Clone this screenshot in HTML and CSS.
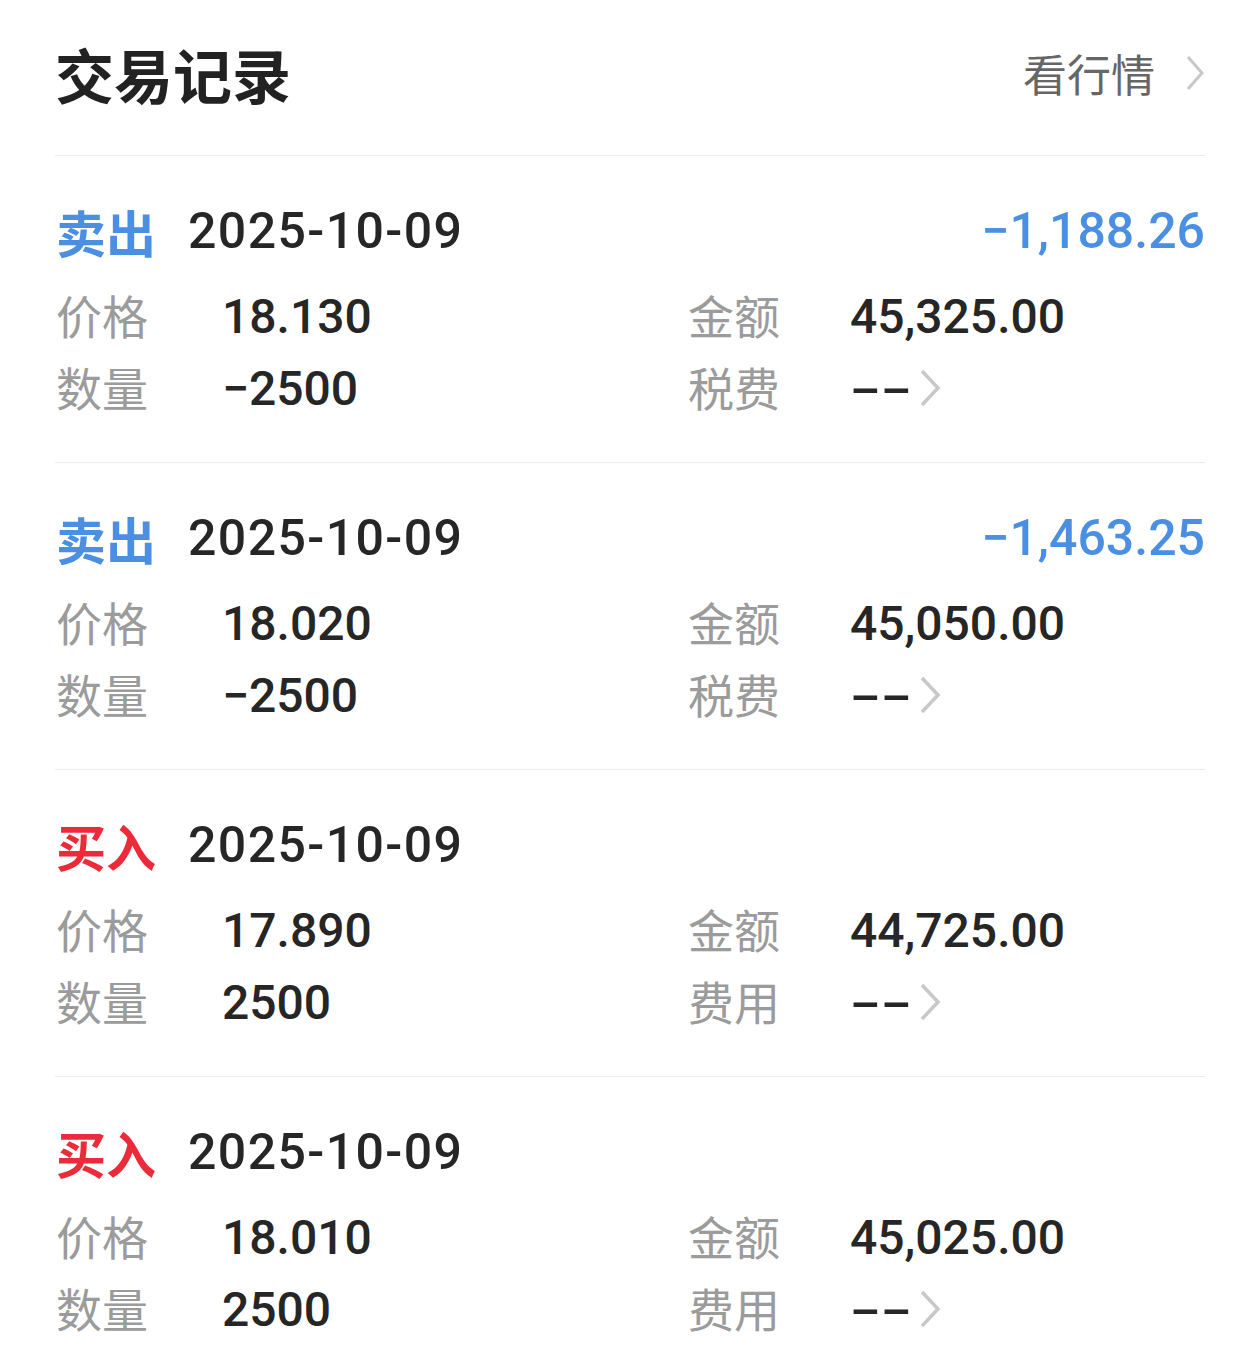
FILE: index.html
```html
<!DOCTYPE html>
<html lang="zh-CN">
<head>
    <meta charset="UTF-8">
    <meta name="viewport" content="width=device-width, initial-scale=1.0">
    <title>交易记录</title>
    <link rel="stylesheet" href="styles.css">
</head>
<body>
    <div class="page">
        <div class="page-header">
            <h1>交易记录</h1>
            <a class="more" href="#">看行情
                <svg class="chevron big" viewBox="0 0 20 38"><path d="M3 3 L17 19 L3 35"/></svg>
            </a>
        </div>

        <div class="record">
            <div class="record-head">
                <span class="side sell">卖出</span>
                <span class="date">2025-10-09</span>
                <span class="profit">&minus;1,188.26</span>
            </div>
            <div class="record-grid">
                <span class="label">价格</span><span class="value">18.130</span>
                <span class="label">金额</span><span class="value">45,325.00</span>
                <span class="label">数量</span><span class="value">&minus;2500</span>
                <span class="label">税费</span>
                <span class="value fee"><span class="dash">--</span><svg class="chevron" viewBox="0 0 22 38"><path d="M3 2 L19 19 L3 36"/></svg></span>
            </div>
        </div>

        <div class="record">
            <div class="record-head">
                <span class="side sell">卖出</span>
                <span class="date">2025-10-09</span>
                <span class="profit">&minus;1,463.25</span>
            </div>
            <div class="record-grid">
                <span class="label">价格</span><span class="value">18.020</span>
                <span class="label">金额</span><span class="value">45,050.00</span>
                <span class="label">数量</span><span class="value">&minus;2500</span>
                <span class="label">税费</span>
                <span class="value fee"><span class="dash">--</span><svg class="chevron" viewBox="0 0 22 38"><path d="M3 2 L19 19 L3 36"/></svg></span>
            </div>
        </div>

        <div class="record">
            <div class="record-head">
                <span class="side buy">买入</span>
                <span class="date">2025-10-09</span>
            </div>
            <div class="record-grid">
                <span class="label">价格</span><span class="value">17.890</span>
                <span class="label">金额</span><span class="value">44,725.00</span>
                <span class="label">数量</span><span class="value">2500</span>
                <span class="label">费用</span>
                <span class="value fee"><span class="dash">--</span><svg class="chevron" viewBox="0 0 22 38"><path d="M3 2 L19 19 L3 36"/></svg></span>
            </div>
        </div>

        <div class="record">
            <div class="record-head">
                <span class="side buy">买入</span>
                <span class="date">2025-10-09</span>
            </div>
            <div class="record-grid">
                <span class="label">价格</span><span class="value">18.010</span>
                <span class="label">金额</span><span class="value">45,025.00</span>
                <span class="label">数量</span><span class="value">2500</span>
                <span class="label">费用</span>
                <span class="value fee"><span class="dash">--</span><svg class="chevron" viewBox="0 0 22 38"><path d="M3 2 L19 19 L3 36"/></svg></span>
            </div>
        </div>
    </div>
</body>
</html>
```

FILE: styles.css
```css
body {
    margin: 0;
    background: #fff;
    font-family: Roboto, "Noto Sans CJK SC", sans-serif;
    color: #262626;
}

.page {
    padding: 0 55px;
}

.page-header {
    height: 146px;
    padding-bottom: 9px;
    display: flex;
    align-items: center;
    justify-content: space-between;
}

.page-header h1 {
    margin: 0;
    font-family: "Noto Sans CJK SC", sans-serif;
    font-size: 59px;
    font-weight: 700;
    color: #222;
    line-height: 1;
}

.more {
    display: flex;
    align-items: center;
    gap: 30px;
    font-family: "Noto Sans CJK SC", sans-serif;
    font-size: 44px;
    color: #666;
    text-decoration: none;
}

.chevron {
    flex: none;
    display: block;
    width: 22px;
    height: 38px;
    fill: none;
    stroke: #c8c8c8;
    stroke-width: 3.5;
}

.chevron.big {
    width: 20px;
    height: 38px;
    stroke-width: 3;
}

.record {
    border-top: 1px solid #ececec;
    padding: 45px 0 38px;
}

.record:last-child {
    padding-bottom: 14px;
}

.record-head {
    display: flex;
    align-items: center;
    height: 60px;
    margin-bottom: 19px;
}

.side {
    font-family: "Noto Sans CJK SC", sans-serif;
    font-size: 50px;
    font-weight: 700;
    margin-left: 1px;
}

.side.sell {
    color: #4a8fe2;
}

.side.buy {
    color: #ec2b3a;
}

.date {
    margin-left: 32px;
    font-size: 50px;
    font-weight: 500;
    letter-spacing: 1.4px;
    color: #262626;
}

.profit {
    margin-left: auto;
    font-size: 50px;
    font-weight: 500;
    color: #4a8fe2;
}

.record-grid {
    display: grid;
    grid-template-columns: 167px 465px 163px 1fr;
    grid-auto-rows: 72px;
    align-items: center;
}

.label {
    font-family: "Noto Sans CJK SC", sans-serif;
    font-size: 46px;
    color: #9b9b9b;
    margin-left: 1px;
    padding-bottom: 5px;
}

.value {
    font-size: 48px;
    font-weight: 500;
    color: #262626;
}

.fee {
    display: flex;
    align-items: center;
}

.dash {
    display: inline-block;
    width: 69px;
    transform: scaleX(1.9);
    transform-origin: left center;
}
```
